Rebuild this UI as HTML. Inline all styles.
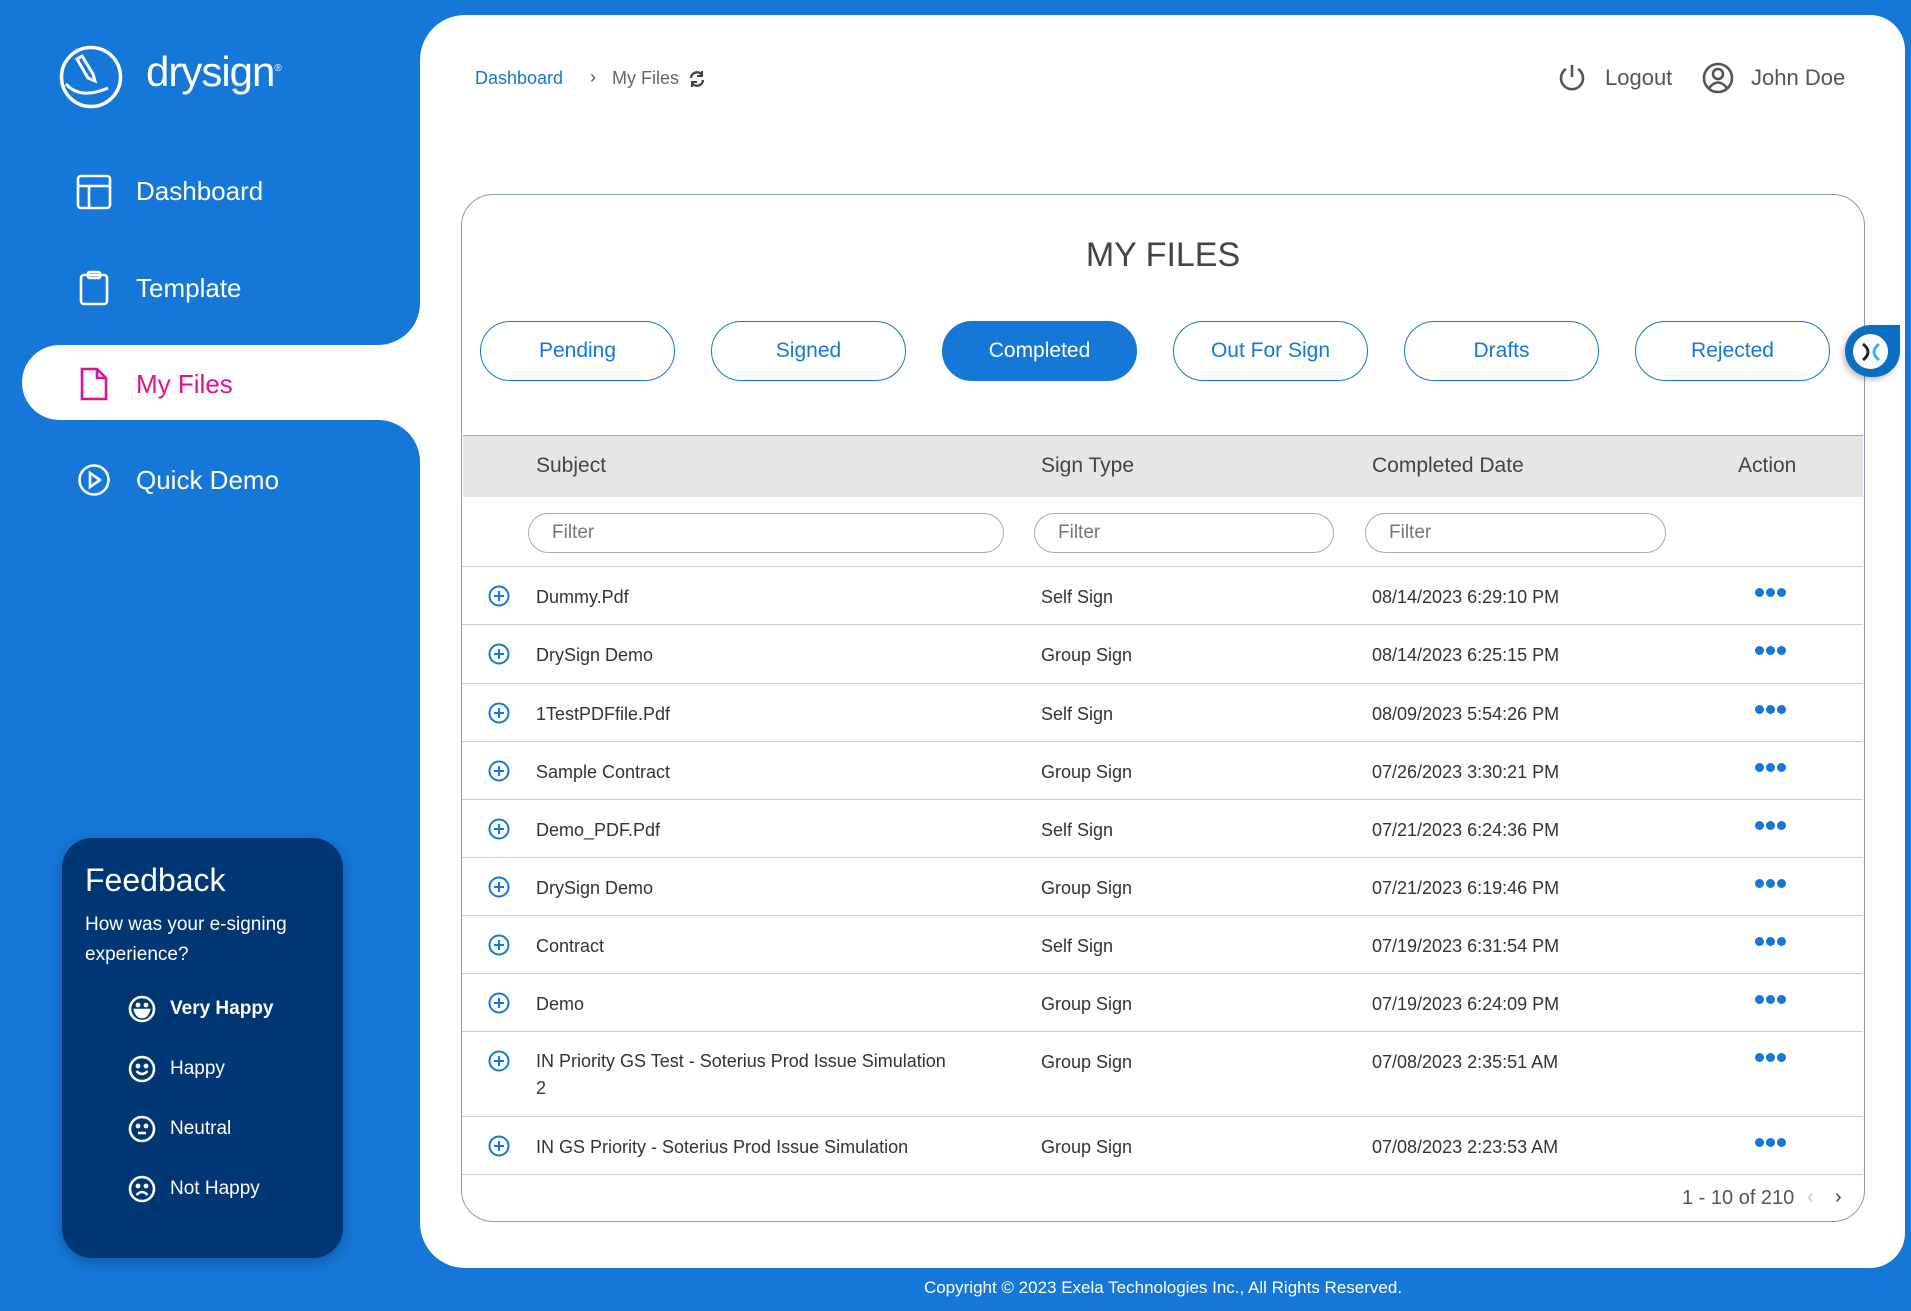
<!DOCTYPE html>
<html><head><meta charset="utf-8"><style>
*{margin:0;padding:0;box-sizing:border-box}
body{width:1911px;height:1311px;background:#1577d8;font-family:"Liberation Sans",sans-serif;position:relative;overflow:hidden}
.abs{position:absolute}
.nav{position:absolute;left:136px;font-size:26px;color:#fff;line-height:1}
.tab{position:absolute;top:321px;width:195px;height:60px;border:1.5px solid #1577d8;border-radius:30px;color:#1577d8;font-size:21px;text-align:center;line-height:57px;background:#fff}
.row{position:absolute;left:462px;width:1401px;border-bottom:1.5px solid #ccc;font-size:18px;color:#333}
.row .c{position:absolute;top:19px;line-height:22px}
.plus{position:absolute;left:26px;top:18px;width:22px;height:22px}
.dots{position:absolute;left:1293px;top:21px;display:flex;gap:2px}
.dots i{display:block;width:9px;height:9px;border-radius:50%;background:#1577d8}
.filter{position:absolute;top:513px;height:40px;border:1px solid #aaa;border-radius:20px;font-size:19px;color:#777;padding-left:23px;line-height:38px}
.fb{position:absolute;left:128px;width:28px;height:28px}
.fbt{position:absolute;left:170px;font-size:19px;color:#fff}
</style></head><body>
<div class="abs" style="left:420px;top:15px;width:1485px;height:1253px;background:#fff;border-radius:45px 35px 35px 45px"></div>
<div class="abs" style="left:380px;top:290px;width:60px;height:180px;background:#fff"></div>
<div class="abs" style="left:0;top:0;width:420px;height:345px;background:#1577d8;border-bottom-right-radius:42px"></div>
<div class="abs" style="left:0;top:420px;width:420px;height:891px;background:#1577d8;border-top-right-radius:42px"></div>
<div class="abs" style="left:22px;top:345px;width:410px;height:75px;background:#fff;border-radius:38px 0 0 38px"></div>

<svg class="abs" style="left:58px;top:44px" width="66" height="66" viewBox="0 0 66 66"><circle cx="33" cy="33" r="29.5" fill="none" stroke="#fff" stroke-width="3.5"/><path d="M19 15 L30 34 L37 37 L35 30 L24 12 Z" fill="none" stroke="#fff" stroke-width="3"/><path d="M8 40 Q22 56 50 44" fill="none" stroke="#fff" stroke-width="3"/></svg>
<div class="abs" style="left:146px;top:48px;font-size:42px;color:#fff;letter-spacing:-1px">drysign<sup style="font-size:10px">®</sup></div>

<svg class="abs" style="left:76px;top:174px" width="36" height="36" viewBox="0 0 36 36" fill="none" stroke="#fff" stroke-width="2.6"><rect x="2" y="2" width="32" height="32" rx="3"/><path d="M2 12H34M13 12V34"/></svg>
<div class="nav" style="top:178px">Dashboard</div>
<svg class="abs" style="left:78px;top:270px" width="32" height="36" viewBox="0 0 32 36" fill="none" stroke="#fff" stroke-width="2.6"><rect x="3" y="5" width="26" height="29" rx="3"/><rect x="10" y="2" width="12" height="6" rx="1.5"/></svg>
<div class="nav" style="top:275px">Template</div>
<svg class="abs" style="left:79px;top:366px" width="30" height="36" viewBox="0 0 30 36" fill="none" stroke="#e0138c" stroke-width="2.6"><path d="M3 3H18L27 12V33H3Z M18 3V12H27"/></svg>
<div class="nav" style="top:371px;color:#e0138c">My Files</div>
<svg class="abs" style="left:77px;top:463px" width="34" height="34" viewBox="0 0 34 34" fill="none" stroke="#fff" stroke-width="2.6"><circle cx="17" cy="17" r="14.5"/><path d="M13 10L23 17L13 24Z"/></svg>
<div class="nav" style="top:467px">Quick Demo</div>

<div class="abs" style="left:62px;top:838px;width:281px;height:420px;background:#003674;border-radius:30px;box-shadow:0 4px 12px rgba(0,0,0,.25)"></div>
<div class="abs" style="left:85px;top:862px;font-size:32px;color:#fff">Feedback</div>
<div class="abs" style="left:85px;top:910px;font-size:19px;color:#fff;line-height:30px">How was your e-signing<br>experience?</div>
<svg class="fb" style="top:995px" viewBox="0 0 28 28" fill="none" stroke="#fff" stroke-width="2.6"><circle cx="14" cy="14" r="12"/><circle cx="10" cy="10" r="1.1" fill="#fff"/><circle cx="18" cy="10" r="1.1" fill="#fff"/><path d="M7 15H21Q19 22 14 22Q9 22 7 15Z" fill="#fff"/></svg>
<div class="fbt" style="top:998px;font-weight:bold">Very Happy</div>
<svg class="fb" style="top:1055px" viewBox="0 0 28 28" fill="none" stroke="#fff" stroke-width="2.6"><circle cx="14" cy="14" r="12"/><circle cx="10" cy="11" r="1.1" fill="#fff"/><circle cx="18" cy="11" r="1.1" fill="#fff"/><path d="M8.5 16Q14 22 19.5 16"/></svg>
<div class="fbt" style="top:1058px">Happy</div>
<svg class="fb" style="top:1115px" viewBox="0 0 28 28" fill="none" stroke="#fff" stroke-width="2.6"><circle cx="14" cy="14" r="12"/><circle cx="10" cy="11" r="1.1" fill="#fff"/><circle cx="18" cy="11" r="1.1" fill="#fff"/><path d="M10 18H18"/></svg>
<div class="fbt" style="top:1118px">Neutral</div>
<svg class="fb" style="top:1175px" viewBox="0 0 28 28" fill="none" stroke="#fff" stroke-width="2.6"><circle cx="14" cy="14" r="12"/><circle cx="10" cy="11" r="1.1" fill="#fff"/><circle cx="18" cy="11" r="1.1" fill="#fff"/><path d="M8.5 20Q14 14 19.5 20"/></svg>
<div class="fbt" style="top:1178px">Not Happy</div>

<div class="abs" style="left:475px;top:68px;font-size:18px;color:#1577d8">Dashboard</div>
<div class="abs" style="left:590px;top:67px;font-size:18px;color:#555">›</div>
<div class="abs" style="left:612px;top:68px;font-size:18px;color:#666">My Files</div>
<svg class="abs" style="left:688px;top:70px" width="18" height="18" viewBox="0 0 18 18" fill="none" stroke="#444" stroke-width="2.4"><path d="M3 8A6 6 0 0 1 14 5M15 10A6 6 0 0 1 4 13"/><path d="M14 1V6H9M4 17V12H9" stroke-width="2"/></svg>

<svg class="abs" style="left:1558px;top:63px" width="28" height="30" viewBox="0 0 28 30" fill="none" stroke="#555" stroke-width="2.6"><path d="M14 2V14"/><path d="M8 6A11 11 0 1 0 20 6"/></svg>
<div class="abs" style="left:1605px;top:65px;font-size:22px;color:#555">Logout</div>
<svg class="abs" style="left:1702px;top:62px" width="32" height="32" viewBox="0 0 32 32" fill="none" stroke="#555" stroke-width="2.6"><circle cx="16" cy="16" r="14"/><circle cx="16" cy="12" r="5"/><path d="M7 26Q16 15 25 26"/></svg>
<div class="abs" style="left:1751px;top:65px;font-size:22px;color:#555">John Doe</div>

<div class="abs" style="left:461px;top:194px;width:1404px;height:1028px;border:1.5px solid #8a9bb0;border-radius:32px;background:#fff"></div>
<div class="abs" style="left:461px;top:236px;width:1404px;text-align:center;font-size:34px;color:#444">MY FILES</div>

<div class="tab" style="left:480px">Pending</div>
<div class="tab" style="left:711px">Signed</div>
<div class="tab" style="left:942px;background:#1577d8;color:#fff">Completed</div>
<div class="tab" style="left:1173px">Out For Sign</div>
<div class="tab" style="left:1404px">Drafts</div>
<div class="tab" style="left:1635px">Rejected</div>

<div class="abs" style="left:1845px;top:325px;width:55px;height:52px;background:#0a6fc2;border-radius:28px 0 28px 28px;box-shadow:-2px 3px 6px rgba(0,0,0,.25)"></div>
<div class="abs" style="left:1853px;top:334px;width:35px;height:35px;background:#fff;border-radius:50%"></div>
<svg class="abs" style="left:1860px;top:342px" width="22" height="20" viewBox="0 0 22 20" fill="none" stroke-width="3"><path d="M3 2Q13 10 3 18" stroke="#222"/><path d="M19 2Q9 10 19 18" stroke="#3ab0f0"/></svg>

<div class="abs" style="left:463px;top:435px;width:1400px;height:62px;background:#e6e6e6;border-top:1.5px solid #aaa"></div>
<div class="abs" style="left:536px;top:454px;font-size:21px;color:#444">Subject</div>
<div class="abs" style="left:1041px;top:454px;font-size:21px;color:#444">Sign Type</div>
<div class="abs" style="left:1372px;top:454px;font-size:21px;color:#444">Completed Date</div>
<div class="abs" style="left:1738px;top:454px;font-size:21px;color:#444">Action</div>

<div class="filter" style="left:528px;width:476px">Filter</div>
<div class="filter" style="left:1034px;width:300px">Filter</div>
<div class="filter" style="left:1365px;width:301px">Filter</div>
<div class="abs" style="left:462px;top:566px;width:1401px;border-top:1.5px solid #ccc"></div>

<div class="row" style="top:567px;height:58px"><svg class="plus" viewBox="0 0 22 22" fill="none" stroke="#1577d8" stroke-width="2"><circle cx="11" cy="11" r="9.5"/><path d="M11 6V16M6 11H16"/></svg><span class="c" style="left:74px">Dummy.Pdf</span><span class="c" style="left:579px">Self Sign</span><span class="c" style="left:910px">08/14/2023 6:29:10 PM</span><span class="dots"><i></i><i></i><i></i></span></div>
<div class="row" style="top:625px;height:59px"><svg class="plus" viewBox="0 0 22 22" fill="none" stroke="#1577d8" stroke-width="2"><circle cx="11" cy="11" r="9.5"/><path d="M11 6V16M6 11H16"/></svg><span class="c" style="left:74px">DrySign Demo</span><span class="c" style="left:579px">Group Sign</span><span class="c" style="left:910px">08/14/2023 6:25:15 PM</span><span class="dots"><i></i><i></i><i></i></span></div>
<div class="row" style="top:684px;height:58px"><svg class="plus" viewBox="0 0 22 22" fill="none" stroke="#1577d8" stroke-width="2"><circle cx="11" cy="11" r="9.5"/><path d="M11 6V16M6 11H16"/></svg><span class="c" style="left:74px">1TestPDFfile.Pdf</span><span class="c" style="left:579px">Self Sign</span><span class="c" style="left:910px">08/09/2023 5:54:26 PM</span><span class="dots"><i></i><i></i><i></i></span></div>
<div class="row" style="top:742px;height:58px"><svg class="plus" viewBox="0 0 22 22" fill="none" stroke="#1577d8" stroke-width="2"><circle cx="11" cy="11" r="9.5"/><path d="M11 6V16M6 11H16"/></svg><span class="c" style="left:74px">Sample Contract</span><span class="c" style="left:579px">Group Sign</span><span class="c" style="left:910px">07/26/2023 3:30:21 PM</span><span class="dots"><i></i><i></i><i></i></span></div>
<div class="row" style="top:800px;height:58px"><svg class="plus" viewBox="0 0 22 22" fill="none" stroke="#1577d8" stroke-width="2"><circle cx="11" cy="11" r="9.5"/><path d="M11 6V16M6 11H16"/></svg><span class="c" style="left:74px">Demo_PDF.Pdf</span><span class="c" style="left:579px">Self Sign</span><span class="c" style="left:910px">07/21/2023 6:24:36 PM</span><span class="dots"><i></i><i></i><i></i></span></div>
<div class="row" style="top:858px;height:58px"><svg class="plus" viewBox="0 0 22 22" fill="none" stroke="#1577d8" stroke-width="2"><circle cx="11" cy="11" r="9.5"/><path d="M11 6V16M6 11H16"/></svg><span class="c" style="left:74px">DrySign Demo</span><span class="c" style="left:579px">Group Sign</span><span class="c" style="left:910px">07/21/2023 6:19:46 PM</span><span class="dots"><i></i><i></i><i></i></span></div>
<div class="row" style="top:916px;height:58px"><svg class="plus" viewBox="0 0 22 22" fill="none" stroke="#1577d8" stroke-width="2"><circle cx="11" cy="11" r="9.5"/><path d="M11 6V16M6 11H16"/></svg><span class="c" style="left:74px">Contract</span><span class="c" style="left:579px">Self Sign</span><span class="c" style="left:910px">07/19/2023 6:31:54 PM</span><span class="dots"><i></i><i></i><i></i></span></div>
<div class="row" style="top:974px;height:58px"><svg class="plus" viewBox="0 0 22 22" fill="none" stroke="#1577d8" stroke-width="2"><circle cx="11" cy="11" r="9.5"/><path d="M11 6V16M6 11H16"/></svg><span class="c" style="left:74px">Demo</span><span class="c" style="left:579px">Group Sign</span><span class="c" style="left:910px">07/19/2023 6:24:09 PM</span><span class="dots"><i></i><i></i><i></i></span></div>
<div class="row" style="top:1032px;height:85px"><svg class="plus" viewBox="0 0 22 22" fill="none" stroke="#1577d8" stroke-width="2"><circle cx="11" cy="11" r="9.5"/><path d="M11 6V16M6 11H16"/></svg><span class="c" style="left:74px;line-height:27px;top:16px">IN Priority GS Test - Soterius Prod Issue Simulation<br>2</span><span class="c" style="left:579px">Group Sign</span><span class="c" style="left:910px">07/08/2023 2:35:51 AM</span><span class="dots"><i></i><i></i><i></i></span></div>
<div class="row" style="top:1117px;height:58px"><svg class="plus" viewBox="0 0 22 22" fill="none" stroke="#1577d8" stroke-width="2"><circle cx="11" cy="11" r="9.5"/><path d="M11 6V16M6 11H16"/></svg><span class="c" style="left:74px">IN GS Priority - Soterius Prod Issue Simulation</span><span class="c" style="left:579px">Group Sign</span><span class="c" style="left:910px">07/08/2023 2:23:53 AM</span><span class="dots"><i></i><i></i><i></i></span></div>

<div class="abs" style="left:1682px;top:1187px;font-size:20px;color:#555">1 - 10 of 210</div>
<div class="abs" style="left:1807px;top:1186px;font-size:20px;color:#ccc">‹</div>
<div class="abs" style="left:1835px;top:1186px;font-size:20px;color:#444">›</div>

<div class="abs" style="left:0;top:1278px;width:2326px;text-align:center;font-size:17px;color:#fff">Copyright © 2023 Exela Technologies Inc., All Rights Reserved.</div>
</body></html>
